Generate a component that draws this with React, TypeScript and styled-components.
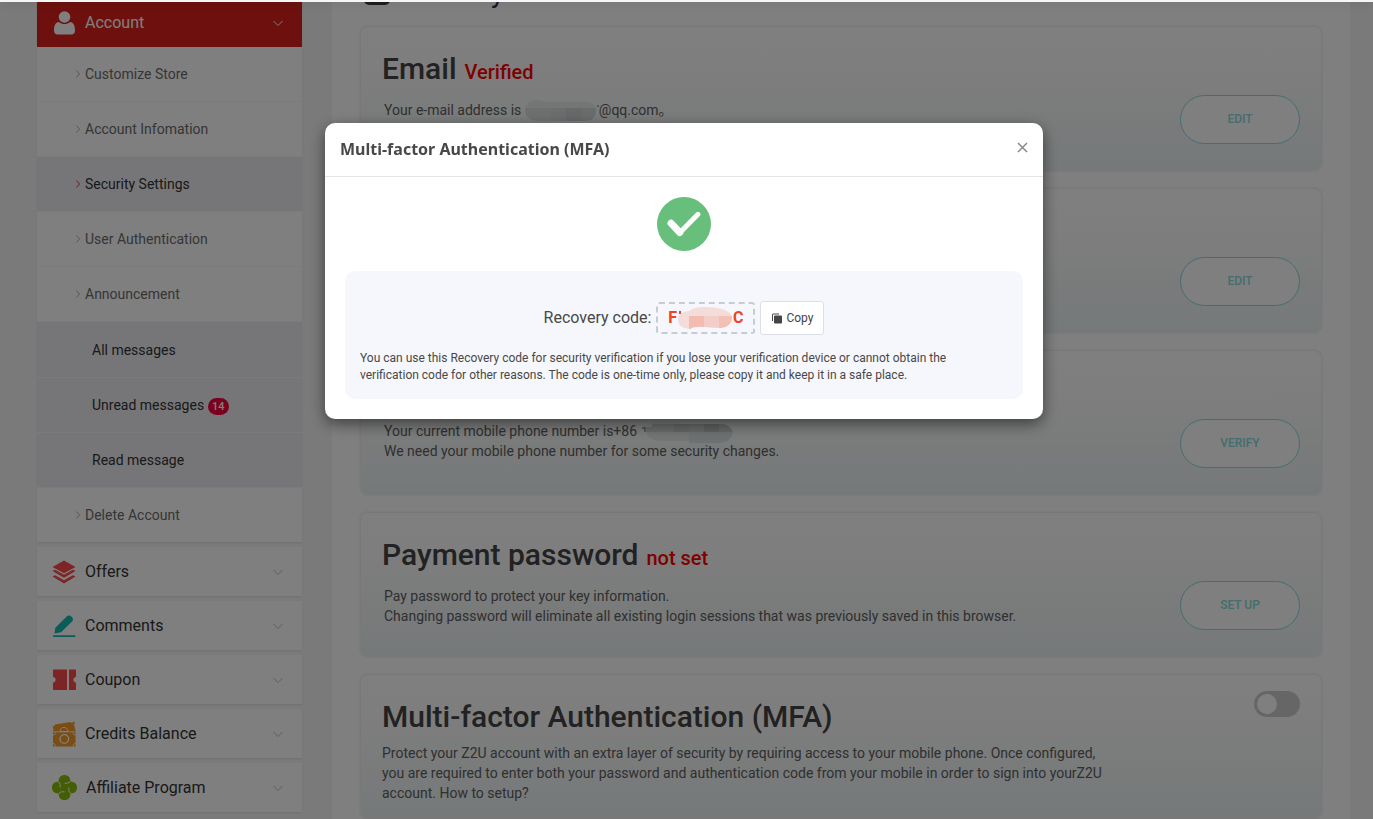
import React from "react";
import styled, { createGlobalStyle, css } from "styled-components";

const GlobalStyle = createGlobalStyle`
  *, *::before, *::after { box-sizing: border-box; }
  body {
    margin: 0;
    background: #f5f5f5;
    color: #484848;
    font-family: Roboto, "Noto Sans CJK SC", sans-serif;
    font-size: 14px;
    line-height: 20px;
  }
  button, input { font-family: inherit; }
`;

const Screen = styled.div`
  display: flex;
  flex-direction: column;
  height: 100vh;
  overflow: hidden;
`;

const TopBar = styled.header`
  flex: none;
  height: 2px;
  background: #f4f6f8;
  box-shadow: 0 2px 10px rgba(0, 0, 0, 0.2);
  z-index: 1;
`;

const Viewport = styled.div`
  flex: 1;
  min-height: 0;
  overflow: hidden;
`;

const Page = styled.div`
  display: flex;
  gap: 30px;
  margin-top: -38px;
  padding: 0 23px 0 37px;
`;

const Sidebar = styled.nav`
  display: flex;
  flex: none;
  flex-direction: column;
  gap: 5px;
  width: 265px;
  padding-top: 34px;
`;

const Group = styled.section`
  background: #fff;
  box-shadow: 0 1px 2px rgba(0, 0, 0, 0.09);
`;

const GroupButton = styled.button<{ $open?: boolean }>`
  display: flex;
  align-items: center;
  gap: 9px;
  width: 100%;
  height: 49px;
  padding: 0 18px 0 15px;
  border: 0;
  background: ${(p) => (p.$open ? "#dc221c" : "#fff")};
  color: ${(p) => (p.$open ? "#fff" : "#333")};
  font-size: 16px;
  text-align: left;

  svg { flex: none; }
  span { flex: 1; }
`;

const SubList = styled.ul`
  margin: 0;
  padding: 0;
  list-style: none;
`;

const NestedList = styled(SubList)`
  border-top: 1px solid #ececf0;
`;

const rowBase = css`
  display: flex;
  align-items: center;
  height: 55px;
  border-bottom: 1px solid #f7f7f7;
  text-decoration: none;
`;

const SubLink = styled.a<{ $active?: boolean }>`
  ${rowBase}
  gap: 4px;
  padding-left: 38px;
  background: ${(p) => (p.$active ? "#ededf0" : "#fff")};
  color: ${(p) => (p.$active ? "#333" : "#6c6c6c")};

  svg { color: ${(p) => (p.$active ? "#e03b3b" : "#b0b0b0")}; }
`;

const LastSubItem = styled.li`
  a { height: 54px; border-bottom: 0; }
`;

const MessageLink = styled.a`
  ${rowBase}
  gap: 4px;
  padding-left: 55px;
  background: #ededf0;
  color: #333;
`;

const Badge = styled.span`
  min-width: 20px;
  margin-top: 2px;
  padding: 0 4px;
  border-radius: 9px;
  background: #f5003d;
  color: #fff;
  font-size: 11px;
  font-weight: 500;
  line-height: 17px;
  text-align: center;
`;

const Main = styled.main`
  flex: 1;
  min-width: 0;
  padding: 0 28px 28px;
  background: #fff;
`;

const TitleRow = styled.div`
  display: flex;
  align-items: center;
  gap: 14px;
  height: 58px;
  margin-bottom: 4px;
  padding-left: 4px;
`;

const PageTitle = styled.h1`
  margin: 0;
  color: #333;
  font-size: 28px;
  font-weight: 400;
  line-height: 32px;
`;

const Cards = styled.div`
  display: flex;
  flex-direction: column;
  gap: 17px;
`;

const Card = styled.section`
  display: flex;
  justify-content: space-between;
  min-height: 145px;
  padding: 0 21px;
  border: 1px solid #f0f0f2;
  border-radius: 8px;
  background: linear-gradient(#fff 0%, #fafbfa 35%, #ecf2f4 100%);
  box-shadow: 0 0 3px rgba(0, 0, 0, 0.1);
`;

const CardText = styled.div`
  padding-top: 24px;
`;

const CardTitle = styled.h2`
  display: flex;
  align-items: baseline;
  gap: 8px;
  margin: 0;
  color: #444;
  font-size: 30px;
  font-weight: 500;
  line-height: 36px;
`;

const Status = styled.span`
  color: #f00;
  font-size: 20px;
`;

const CardBody = styled.div<{ $wide?: boolean }>`
  max-width: 734px;
  margin-top: ${(p) => (p.$wide ? 8 : 10)}px;
  padding-left: ${(p) => (p.$wide ? 0 : 2)}px;
  color: #606060;

  p { margin: 0; }
  svg { margin: -4px 0; vertical-align: middle; }
`;

const CardAction = styled.div<{ $top?: boolean }>`
  display: flex;
  flex: none;
  align-items: ${(p) => (p.$top ? "flex-start" : "flex-end")};
  padding: 16px 0 26px;
`;

const PillButton = styled.button`
  width: 120px;
  height: 49px;
  padding: 0 0 2px;
  border: 1px solid #88dbdc;
  border-radius: 25px;
  background: #fff;
  color: #88dbdc;
  font-size: 12px;
  font-weight: 500;
`;

const Switch = styled.input`
  width: 46px;
  height: 26px;
  margin: 0;
  padding: 3px;
  border-radius: 13px;
  background: #ccc;
  appearance: none;

  &::before {
    display: block;
    width: 20px;
    height: 20px;
    border-radius: 50%;
    background: #fff;
    content: "";
  }
`;

const Backdrop = styled.div`
  position: fixed;
  inset: 2px 0 0;
  z-index: 2;
  display: flex;
  align-items: flex-start;
  justify-content: center;
  padding: 121px 5px 0 0;
  background: rgba(0, 0, 0, 0.5);
`;

const Dialog = styled.div`
  width: 718px;
  max-width: 100%;
  border-radius: 10px;
  background: #fff;
  box-shadow: 0 5px 15px rgba(0, 0, 0, 0.5);
`;

const DialogHeader = styled.div`
  display: flex;
  align-items: center;
  justify-content: space-between;
  height: 54px;
  padding: 0 15px 2px;
  border-bottom: 1px solid #e5e5e5;
`;

const DialogTitle = styled.h3`
  margin: 0;
  font-family: "Noto Sans", "Open Sans", sans-serif;
  font-size: 16px;
  font-weight: 700;
  line-height: 24px;
`;

const CloseButton = styled.button`
  display: flex;
  padding: 0 0 2px;
  border: 0;
  background: none;
  color: #8a8a8a;
`;

const DialogBody = styled.div`
  display: flex;
  flex-direction: column;
  align-items: center;
  gap: 20px;
  padding: 20px;
`;

const CodePanel = styled.div`
  width: 100%;
  padding: 30px 15px 15px;
  border-radius: 10px;
  background: #f6f7fc;
`;

const CodeRow = styled.div`
  display: flex;
  align-items: center;
  justify-content: center;
  gap: 5px;
  font-size: 16px;
`;

const CodeBox = styled.output`
  display: flex;
  align-items: center;
  justify-content: center;
  width: 99px;
  height: 32px;
  border: 2px dashed #c5cdd3;
  border-radius: 3px;
  color: #f0431e;
  font-weight: 700;
`;

const CopyButton = styled.button`
  display: flex;
  align-items: center;
  justify-content: center;
  gap: 4px;
  width: 64px;
  height: 34px;
  padding: 0;
  border: 1px solid #dcdfe6;
  border-radius: 3px;
  background: #fff;
  color: #444;
  font-size: 12px;
`;

const Note = styled.p`
  max-width: 610px;
  margin: 15px 0 0;
  font-size: 12px;
  line-height: 17px;
`;

const ChevronDown = ({ color = "#bdbdbd" }: { color?: string }) => (
  <svg width="12" height="12" viewBox="0 0 12 12" fill="none" stroke={color} aria-hidden="true">
    <path d="M1.500 4l4.500 4.500L10.500 4" />
  </svg>
);

const ChevronRight = () => (
  <svg width="6" height="10" viewBox="0 0 6 10" fill="none" stroke="currentColor" aria-hidden="true">
    <path d="M1.500 1.500L4.500 5L1.500 8.500" />
  </svg>
);

const UserIcon = () => (
  <svg width="24" height="24" viewBox="0 0 24 24" fill="#fff" aria-hidden="true">
    <circle cx="12.500" cy="6" r="5.800" />
    <path d="M7 11C3.500 11.500 2 14.500 2 19.500C2 22 3.500 23.500 5.500 23.500H19.500C21.500 23.500 23 22 23 19.500C23 14.500 21.500 11.500 18 11C16.500 12.500 14.500 13 12.500 13S8.500 12.500 7 11Z" />
  </svg>
);

const LayersIcon = () => (
  <svg width="24" height="24" viewBox="0 0 24 24" fill="#fb4a4a" aria-hidden="true">
    <path d="M12 .5L23.500 7L12 13.200L.5 7Z" />
    <path d="M.5 11L3 9.800L12 14.700L21 9.800L23.500 11L12 17.800Z" />
    <path d="M.5 16.500L3 15.200L12 20.200L21 15.200L23.500 16.500L12 23.500Z" />
  </svg>
);

const PenIcon = () => (
  <svg width="24" height="24" viewBox="0 0 24 24" fill="#12b9ae" aria-hidden="true">
    <path d="M2.500 19.500L3.300 13.800L15 2.200C17.500 -.2 22.800 4.500 20.300 7.200L9 18.300Z" />
    <rect x="1" y="21.300" width="22.500" height="1.800" rx=".9" />
  </svg>
);

const CouponIcon = () => (
  <svg width="24" height="24" viewBox="0 0 24 24" fill="#fb4a4a" aria-hidden="true">
    <path d="M2 1.500H15V22H2C1.400 22 1 21.600 1 21V14.500C4.500 14 4.500 9.500 1 9V2.500C1 1.900 1.400 1.500 2 1.500Z" />
    <path d="M17 1.500H23C23.600 1.500 24 1.900 24 2.500V9C20.500 9.500 20.500 14 24 14.500V21C24 21.600 23.600 22 23 22H17Z" />
  </svg>
);

const CreditsIcon = () => (
  <svg width="24" height="26" viewBox="0 0 24 26" fill="none" aria-hidden="true">
    <path d="M.5 5C2 5.500 3 4.500 3 3.500L18.500 1C19.500 2.500 21 2 21.500 .5L23 1.500L22 3.500L23.500 9.500V25.500H1V10.500L1.500 8Z" fill="#f49b2a" />
    <path d="M1 10.800H23.500" stroke="#fff" strokeWidth=".9" />
    <path d="M8 10.500C8 5 16 5 16 10.500Z" stroke="#fff" />
    <circle cx="12.300" cy="18" r="4.300" stroke="#fff" strokeWidth="1.300" />
    <path d="M1 14C2.500 14 3.500 13 3.500 11.500M21 11.500C21 13 22 14 23.500 14M1 22.500C2.500 22.500 3.500 24 3.500 25.500M21 25.500C21 24 22 22.500 23.500 22.500" stroke="#fff" />
  </svg>
);

const turns = [0, 90, 180, 270];

const AffiliateIcon = () => (
  <svg width="25" height="25" viewBox="0 0 26 26" fill="#87bd0a" aria-hidden="true">
    <rect x="6" y="6" width="14" height="14" />
    {turns.map((angle) => (
      <rect key={angle} x="7" y="0" width="12" height="14" rx="5.500" transform={`rotate(${angle} 13 13)`} />
    ))}
    {turns.map((angle) => (
      <path
        key={angle}
        transform={`rotate(${angle} 13 13)`}
        d="M13 8.500H16Q18.500 8.300 19.500 5.500"
        fill="none"
        stroke="#fff"
        strokeWidth="1"
      />
    ))}
  </svg>
);

const SuccessIcon = () => (
  <svg width="54" height="54" viewBox="0 0 54 54" fill="none" aria-hidden="true">
    <circle cx="27" cy="27" r="27" fill="#67bf7b" />
    <path d="M14 26.200L22.800 35.500" stroke="#fff" strokeWidth="7" strokeLinecap="round" />
    <path d="M41 17.300L23 35.500" stroke="#fff" strokeWidth="5" strokeLinecap="round" />
  </svg>
);

const CopyIcon = () => (
  <svg width="11" height="11" viewBox="0 0 11 11" fill="none" aria-hidden="true">
    <path d="M1.500 8V1.500Q1.500 1 2 1H8" stroke="#444" />
    <rect x="3" y="2.500" width="8" height="8" rx="1" fill="#444" />
  </svg>
);

const EmailMask = () => (
  <svg width="74" height="22" viewBox="0 0 74 22" aria-hidden="true">
    <path d="M72 6H74" stroke="#606060" />
    <clipPath id="email-mask"><path d="M11 0C17 0 18 2 24 2H60Q72 2 71 11Q70 21 60 21H12C-4 20 -3 1 11 0Z" /></clipPath>
    <g clipPath="url(#email-mask)">
      <rect width="72" height="22" fill="#e8ebeb" />
      <rect y="8" width="26" height="14" fill="#dde0e0" />
      <rect x="26" y="8" width="15" height="14" fill="#d8dbdc" />
      <rect x="41" y="8" width="15" height="14" fill="#cdd1d2" />
      <rect x="56" y="8" width="16" height="14" fill="#d3d7d8" />
    </g>
  </svg>
);

const PhoneMask = () => (
  <svg width="93" height="22" viewBox="-5 0 93 22" aria-hidden="true">
    <path d="M-4 7.500L-1 6.500V11" fill="none" stroke="#606060" />
    <clipPath id="phone-mask"><path d="M9 1H34V3H77Q84 4 87 11Q84 22 75 22H43V20H14Q3 19 0 11V6H5Z" /></clipPath>
    <g clipPath="url(#phone-mask)">
      <rect width="88" height="22" fill="#eceeee" />
      <rect y="11" width="43" height="11" fill="#e6eaea" />
      <rect x="43" y="11" width="45" height="11" fill="#dde2e3" />
      <rect y="3" width="28" height="8" fill="#d2d4d5" />
      <rect x="28" y="3" width="15" height="8" fill="#c8cacb" />
      <rect x="43" y="3" width="15" height="8" fill="#ced0d0" />
      <rect x="58" y="3" width="15" height="8" fill="#bdbfc0" />
      <rect x="73" y="3" width="15" height="8" fill="#cccecf" />
    </g>
  </svg>
);

const CodeMask = () => (
  <svg width="56" height="22" viewBox="0 0 56 22" aria-hidden="true">
    <rect x="2" y="4" width="2" height="3" fill="#f0431e" />
    <clipPath id="code-mask"><path d="M12 4Q16 0 28 0Q40 0 48 3Q55 6 55 11Q54 20 44 21L27 20Q17 19 13 22Q0 21 1 11Q2 5 12 4Z" /></clipPath>
    <g clipPath="url(#code-mask)">
      <rect width="56" height="22" fill="#f3dcda" />
      <rect x="12" y="9" width="15" height="13" fill="#f4bcb1" />
      <rect x="27" y="9" width="15" height="13" fill="#f3cec8" />
      <rect x="42" y="9" width="14" height="13" fill="#f4bfb5" />
    </g>
  </svg>
);

const accountLinks = [
  { label: "Customize Store" },
  { label: "Account Infomation" },
  { label: "Security Settings", active: true },
  { label: "User Authentication" },
];

const messageLinks: { label: string; count?: number }[] = [
  { label: "All messages" },
  { label: "Unread messages", count: 14 },
  { label: "Read message" },
];

const groups = [
  { label: "Offers", icon: <LayersIcon /> },
  { label: "Comments", icon: <PenIcon /> },
  { label: "Coupon", icon: <CouponIcon /> },
  { label: "Credits Balance", icon: <CreditsIcon /> },
  { label: "Affiliate Program", icon: <AffiliateIcon /> },
];

const settings: { title: string; status: string; action: string; body: React.ReactNode }[] = [
  {
    title: "Email",
    status: "Verified",
    action: "EDIT",
    body: <p>Your e-mail address is <EmailMask />@qq.com。</p>,
  },
  {
    title: "Login password",
    status: "Set",
    action: "EDIT",
    body: <p>Keep your account safe with a strong password.</p>,
  },
  {
    title: "Mobile phone",
    status: "",
    action: "VERIFY",
    body: (
      <>
        <p>Your current mobile phone number is+86 <PhoneMask /></p>
        <p>We need your mobile phone number for some security changes.</p>
      </>
    ),
  },
  {
    title: "Payment password",
    status: "not set",
    action: "SET UP",
    body: (
      <>
        <p>Pay password to protect your key information.</p>
        <p>Changing password will eliminate all existing login sessions that was previously saved in this browser.</p>
      </>
    ),
  },
];

export default function App() {
  return (
    <Screen>
      <GlobalStyle />
      <TopBar />
      <Viewport>
        <Page>
          <Sidebar aria-label="Account menu">
            <Group>
              <GroupButton $open aria-expanded="true">
                <UserIcon />
                <span>Account</span>
                <ChevronDown color="#fff" />
              </GroupButton>
              <SubList>
                {accountLinks.map((link) => (
                  <li key={link.label}>
                    <SubLink href="#" $active={link.active}>
                      <ChevronRight />
                      {link.label}
                    </SubLink>
                  </li>
                ))}
                <li>
                  <SubLink href="#">
                    <ChevronRight />
                    Announcement
                  </SubLink>
                  <NestedList>
                    {messageLinks.map((link) => (
                      <li key={link.label}>
                        <MessageLink href="#">
                          {link.label}
                          {link.count && <Badge>{link.count}</Badge>}
                        </MessageLink>
                      </li>
                    ))}
                  </NestedList>
                </li>
                <LastSubItem>
                  <SubLink href="#">
                    <ChevronRight />
                    Delete Account
                  </SubLink>
                </LastSubItem>
              </SubList>
            </Group>
            {groups.map((group) => (
              <Group key={group.label}>
                <GroupButton aria-expanded="false">
                  {group.icon}
                  <span>{group.label}</span>
                  <ChevronDown />
                </GroupButton>
              </Group>
            ))}
          </Sidebar>

          <Main>
            <TitleRow>
              <svg width="26" height="24" viewBox="0 0 26 24" aria-hidden="true">
                <rect width="26" height="24" rx="5" fill="#3a3a3a" />
              </svg>
              <PageTitle>Security</PageTitle>
            </TitleRow>
            <Cards>
              {settings.map((item) => (
                <Card key={item.title}>
                  <CardText>
                    <CardTitle>
                      {item.title} {item.status && <Status>{item.status}</Status>}
                    </CardTitle>
                    <CardBody>{item.body}</CardBody>
                  </CardText>
                  <CardAction>
                    <PillButton>{item.action}</PillButton>
                  </CardAction>
                </Card>
              ))}
              <Card>
                <CardText>
                  <CardTitle id="mfa-title">Multi-factor Authentication (MFA)</CardTitle>
                  <CardBody $wide>
                    <p>
                      Protect your Z2U account with an extra layer of security by requiring access to your mobile
                      phone. Once configured, you are required to enter both your password and authentication code
                      from your mobile in order to sign into yourZ2U account. How to setup?
                    </p>
                  </CardBody>
                </CardText>
                <CardAction $top>
                  <Switch type="checkbox" role="switch" aria-labelledby="mfa-title" />
                </CardAction>
              </Card>
            </Cards>
          </Main>
        </Page>
      </Viewport>

      <Backdrop>
        <Dialog role="dialog" aria-modal="true" aria-labelledby="dialog-title">
          <DialogHeader>
            <DialogTitle id="dialog-title">Multi-factor Authentication (MFA)</DialogTitle>
            <CloseButton aria-label="Close">
              <svg width="11" height="11" viewBox="0 0 11 11" fill="none" stroke="currentColor" strokeWidth="1.500">
                <path d="M1 1L10 10M10 1L1 10" />
              </svg>
            </CloseButton>
          </DialogHeader>
          <DialogBody>
            <SuccessIcon />
            <CodePanel>
              <CodeRow>
                <label htmlFor="recovery-code">Recovery code:</label>
                <CodeBox id="recovery-code">
                  F<CodeMask />C
                </CodeBox>
                <CopyButton>
                  <CopyIcon />
                  Copy
                </CopyButton>
              </CodeRow>
              <Note>
                You can use this Recovery code for security verification if you lose your verification device or
                cannot obtain the verification code for other reasons. The code is one-time only, please copy it and
                keep it in a safe place.
              </Note>
            </CodePanel>
          </DialogBody>
        </Dialog>
      </Backdrop>
    </Screen>
  );
}
